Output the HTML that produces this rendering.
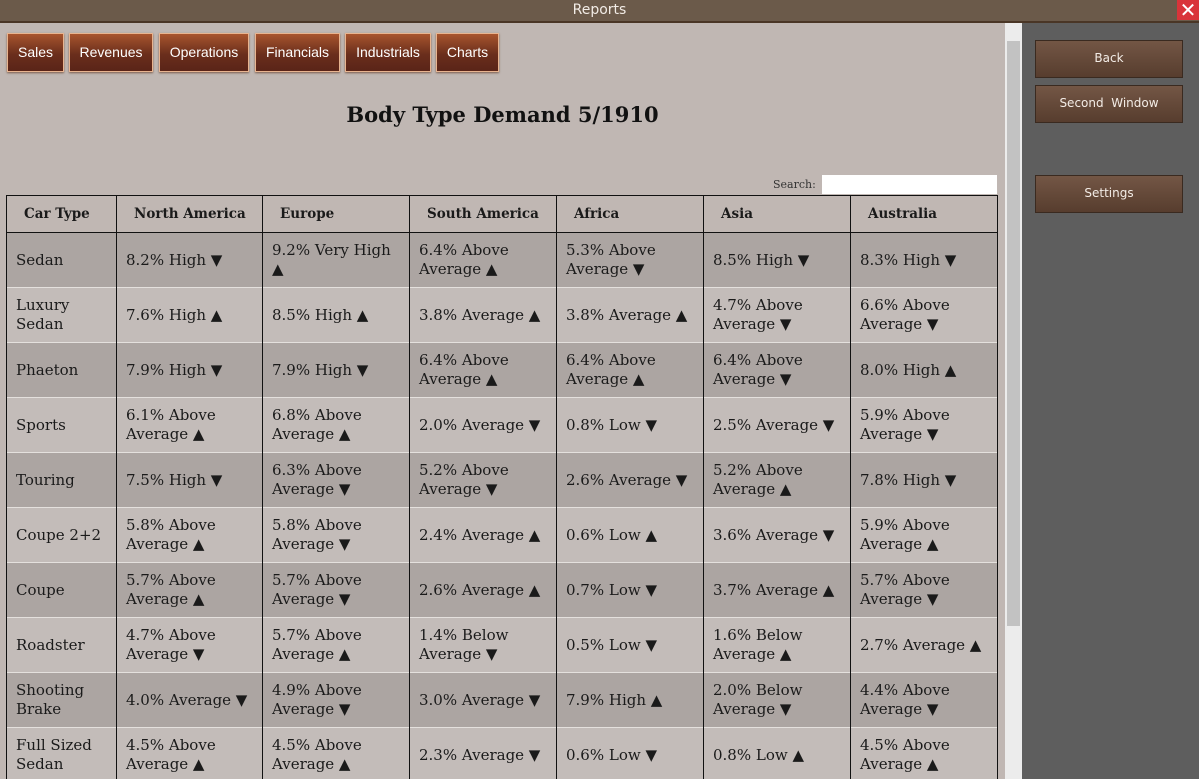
<!DOCTYPE html>
<html><head><meta charset="utf-8"><style>
*{margin:0;padding:0;box-sizing:border-box}
body{width:1199px;height:779px;overflow:hidden;background:#5e5e5e;font-family:"DejaVu Serif","Liberation Serif",serif;position:relative}
.title{position:absolute;left:0;top:0;width:1199px;height:23px;background:#6b5a4a;border-bottom:2px solid #4a3626;color:#f2ece6;font:14px "DejaVu Sans",sans-serif;text-align:center;line-height:21px}
.close{position:absolute;right:0;top:0;width:22px;height:20px;background:#d9343a;color:#fff;font:20px "DejaVu Sans",sans-serif;line-height:20px;text-align:center}
.main{position:absolute;left:0;top:23px;width:1005px;height:756px;background:#c0b7b3;overflow:hidden}
.scroll{position:absolute;left:1005px;top:23px;width:17px;height:756px;background:#ececec}
.thumb{position:absolute;left:2px;top:18px;width:13px;height:585px;background:#c2c2c2}
.tab{position:absolute;top:10px;height:39px;background:linear-gradient(#a8552e,#6a2e1c 55%,#5a2418);border:1px solid #e8b490;color:#fff;font:14px "Liberation Sans",sans-serif;text-align:center;line-height:37px;box-shadow:0 1px 2px #7a5a4a}
h1{position:absolute;left:0;width:1005px;top:79px;text-align:center;font-size:21px;font-weight:bold;color:#111}
.search{position:absolute;left:773px;top:155px;font-size:11px;color:#333}
.inp{position:absolute;left:822px;top:152px;width:175px;height:19px;background:#fff}
table{position:absolute;left:6px;top:172px;border-collapse:collapse;font-size:15px;color:#1a1a1a}
td,th{border-left:1px solid #111;border-right:1px solid #111;padding:0 9px;vertical-align:middle;line-height:19px;text-align:left}
th{height:37px;font-size:13.5px;font-weight:bold;border:1px solid #111;padding-left:17px}
td{height:55px;border-top:1px solid #e4e0dd}
tr.d td{background:#aca5a2}
tr.l td{background:#c3bcb9}
.btn{position:absolute;left:1035px;width:148px;height:38px;background:linear-gradient(#735645,#573d2e);border:1px solid #3a2a20;color:#f3ece6;font:12px "DejaVu Sans",sans-serif;text-align:center;line-height:34px}
</style></head><body>
<div class="title">Reports</div><div class="close">✕</div>
<div class="main">
<div class="tab" style="left:7px;width:57px">Sales</div>
<div class="tab" style="left:69px;width:84px">Revenues</div>
<div class="tab" style="left:159px;width:90px">Operations</div>
<div class="tab" style="left:255px;width:85px">Financials</div>
<div class="tab" style="left:345px;width:86px">Industrials</div>
<div class="tab" style="left:436px;width:63px">Charts</div>
<h1>Body Type Demand 5/1910</h1>
<div class="search">Search:</div><div class="inp"></div>
<table>
<colgroup><col style="width:110px"><col style="width:146px"><col style="width:147px"><col style="width:147px"><col style="width:147px"><col style="width:147px"><col style="width:147px"></colgroup>
<tr><th>Car Type</th><th>North America</th><th>Europe</th><th>South America</th><th>Africa</th><th>Asia</th><th>Australia</th></tr>
<tr class="d"><td>Sedan</td><td>8.2% High ▼</td><td>9.2% Very High ▲</td><td>6.4% Above Average ▲</td><td>5.3% Above Average ▼</td><td>8.5% High ▼</td><td>8.3% High ▼</td></tr>
<tr class="l"><td>Luxury Sedan</td><td>7.6% High ▲</td><td>8.5% High ▲</td><td>3.8% Average ▲</td><td>3.8% Average ▲</td><td>4.7% Above Average ▼</td><td>6.6% Above Average ▼</td></tr>
<tr class="d"><td>Phaeton</td><td>7.9% High ▼</td><td>7.9% High ▼</td><td>6.4% Above Average ▲</td><td>6.4% Above Average ▲</td><td>6.4% Above Average ▼</td><td>8.0% High ▲</td></tr>
<tr class="l"><td>Sports</td><td>6.1% Above Average ▲</td><td>6.8% Above Average ▲</td><td>2.0% Average ▼</td><td>0.8% Low ▼</td><td>2.5% Average ▼</td><td>5.9% Above Average ▼</td></tr>
<tr class="d"><td>Touring</td><td>7.5% High ▼</td><td>6.3% Above Average ▼</td><td>5.2% Above Average ▼</td><td>2.6% Average ▼</td><td>5.2% Above Average ▲</td><td>7.8% High ▼</td></tr>
<tr class="l"><td>Coupe 2+2</td><td>5.8% Above Average ▲</td><td>5.8% Above Average ▼</td><td>2.4% Average ▲</td><td>0.6% Low ▲</td><td>3.6% Average ▼</td><td>5.9% Above Average ▲</td></tr>
<tr class="d"><td>Coupe</td><td>5.7% Above Average ▲</td><td>5.7% Above Average ▼</td><td>2.6% Average ▲</td><td>0.7% Low ▼</td><td>3.7% Average ▲</td><td>5.7% Above Average ▼</td></tr>
<tr class="l"><td>Roadster</td><td>4.7% Above Average ▼</td><td>5.7% Above Average ▲</td><td>1.4% Below Average ▼</td><td>0.5% Low ▼</td><td>1.6% Below Average ▲</td><td>2.7% Average ▲</td></tr>
<tr class="d"><td>Shooting Brake</td><td>4.0% Average ▼</td><td>4.9% Above Average ▼</td><td>3.0% Average ▼</td><td>7.9% High ▲</td><td>2.0% Below Average ▼</td><td>4.4% Above Average ▼</td></tr>
<tr class="l"><td>Full Sized Sedan</td><td>4.5% Above Average ▲</td><td>4.5% Above Average ▲</td><td>2.3% Average ▼</td><td>0.6% Low ▼</td><td>0.8% Low ▲</td><td>4.5% Above Average ▲</td></tr>
</table>
</div>
<div class="scroll"><div class="thumb"></div></div>
<div class="btn" style="top:40px">Back</div>
<div class="btn" style="top:85px">Second&nbsp; Window</div>
<div class="btn" style="top:175px">Settings</div>
</body></html>
